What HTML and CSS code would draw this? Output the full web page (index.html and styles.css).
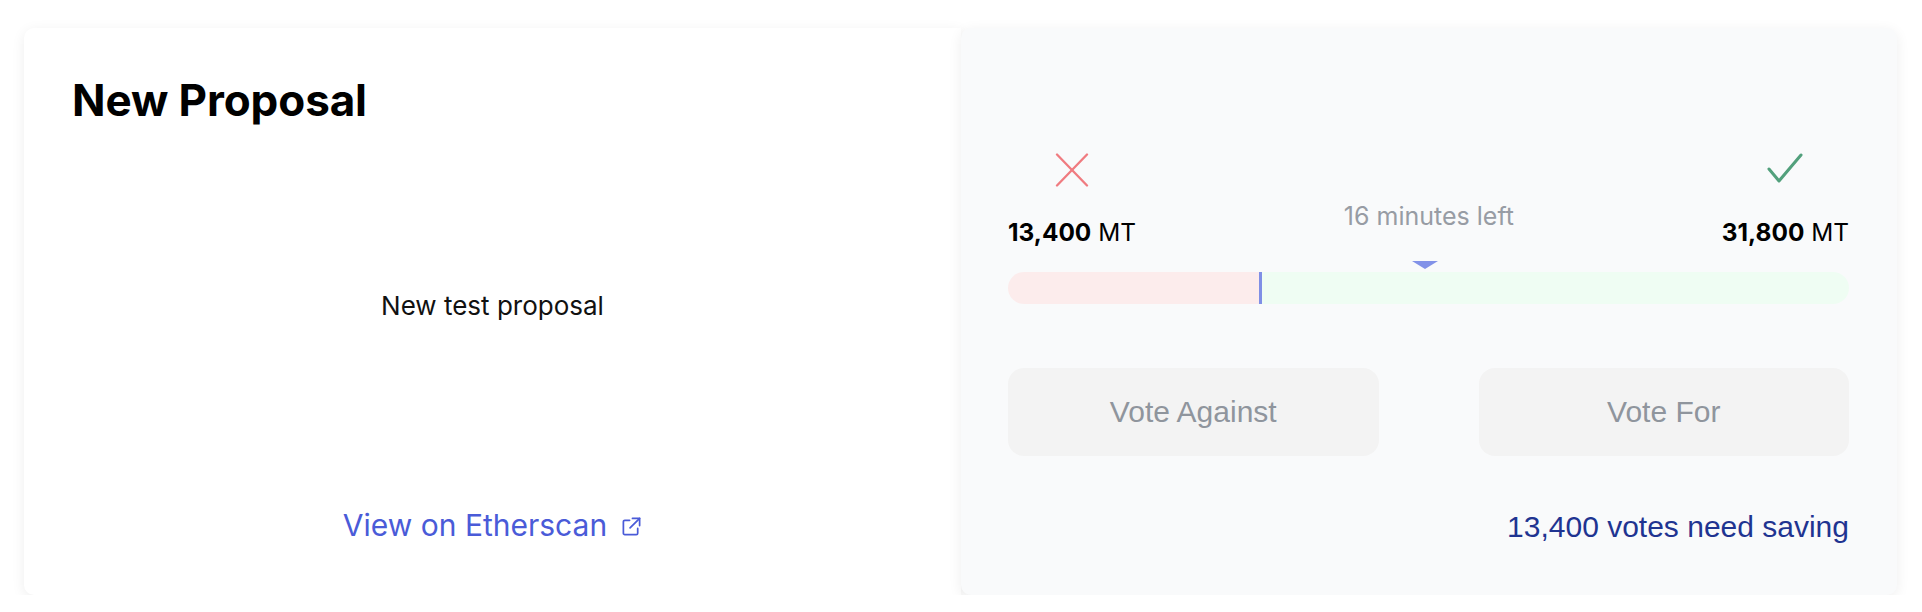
FILE: index.html
```html
<!DOCTYPE html>
<html>
<head>
<meta charset="utf-8">
<link rel="stylesheet" href="styles.css">
</head>
<body>
<div class="page">
  <section class="card card-info">
    <h1 class="title">New Proposal</h1>
    <p class="desc">New test proposal</p>
    <a class="scan-link" href="#">View on Etherscan
      <svg class="ext-icon" viewBox="0 0 22 22" width="21" height="21" fill="none" stroke="currentColor" stroke-width="1.8" stroke-linecap="round" stroke-linejoin="round">
        <path d="M12 2.5h7.5v7.5"/>
        <path d="M19.5 2.5L9.5 12.5"/>
        <path d="M17.5 13v5a1.5 1.5 0 0 1-1.5 1.5H4A1.5 1.5 0 0 1 2.5 18V6A1.5 1.5 0 0 1 4 4.5h5"/>
      </svg>
    </a>
  </section>
  <section class="card card-vote">
    <div class="tally">
      <div class="side">
        <svg class="icon-x" viewBox="0 0 34 34" width="34" height="34" fill="none" stroke="#f07b80" stroke-width="2.3" stroke-linecap="round">
          <path d="M2 1.5L32 32.5"/>
          <path d="M32 1.5L2 32.5"/>
        </svg>
        <div class="amount"><b>13,400</b> MT</div>
      </div>
      <div class="time">16 minutes left</div>
      <div class="side">
        <svg class="icon-check" viewBox="0 0 36 34" width="36" height="34" fill="none" stroke="#52a07c" stroke-width="3" stroke-linecap="round" stroke-linejoin="round">
          <path d="M2 16L12 28L34 2"/>
        </svg>
        <div class="amount"><b>31,800</b> MT</div>
      </div>
    </div>
    <div class="bar">
      <span class="pointer"></span>
      <div class="bar-against" style="width: 30.2%"></div>
      <div class="bar-for"></div>
    </div>
    <div class="buttons">
      <button class="vote-btn">Vote Against</button>
      <button class="vote-btn">Vote For</button>
    </div>
    <div class="saving">13,400 votes need saving</div>
  </section>
</div>
</body>
</html>
```

FILE: styles.css
```css
* { box-sizing: border-box; }

body {
  margin: 0;
  background: #ffffff;
  font-family: Inter, "Noto Sans", sans-serif;
  color: #000;
}

.page {
  display: grid;
  grid-template-columns: 937px 936px;
  padding: 28px 25px 0 24px;
}

.card {
  height: 567px;
  box-shadow: 0 3px 14px rgba(0, 0, 0, 0.07);
}

.card-info {
  background: #ffffff;
  border-radius: 10px 0 0 10px;
  padding: 46px 48px 0;
  display: flex;
  flex-direction: column;
}

.title {
  margin: 0;
  font-size: 44px;
  line-height: 52px;
  font-weight: 700;
  letter-spacing: -0.1px;
}

.desc {
  margin: 165px 0 0;
  text-align: center;
  font-size: 26px;
  line-height: 30px;
  color: #111;
}

.scan-link {
  margin-top: 186px;
  align-self: center;
  display: flex;
  align-items: center;
  gap: 14px;
  font-size: 30px;
  line-height: 36px;
  color: #4a5bd8;
  text-decoration: none;
}

.ext-icon { margin-top: 2px; }

.card-vote {
  position: relative;
  z-index: 1;
  background: #f9fafb;
  border-radius: 10px;
  padding: 125px 48px 0 47px;
}

.tally {
  display: flex;
  justify-content: space-between;
  align-items: flex-start;
}

.side {
  display: flex;
  flex-direction: column;
  align-items: center;
}

.side svg {
  display: block;
  margin-bottom: 31px;
}

.amount {
  font-size: 24.4px;
  line-height: 28px;
  white-space: nowrap;
}

.amount b { font-weight: 700; }

.time {
  margin-top: 49px;
  font-size: 25px;
  line-height: 28px;
  color: #979ca4;
}

.bar {
  position: relative;
  margin-top: 26px;
  height: 32px;
  border-radius: 16px;
  display: flex;
}

.bar-against {
  background: #fcecec;
  border-radius: 16px 0 0 16px;
  border-right: 3px solid #7f8fe6;
}

.bar-for {
  flex: 1;
  background: #effdf3;
  border-radius: 0 16px 16px 0;
}

.pointer {
  position: absolute;
  left: 50%;
  top: -11px;
  margin-left: -17px;
  width: 0;
  height: 0;
  border-left: 13px solid transparent;
  border-right: 13px solid transparent;
  border-top: 8px solid #8292e8;
}

.buttons {
  margin-top: 64px;
  display: grid;
  grid-template-columns: 1fr 1fr;
  gap: 100px;
}

.vote-btn {
  height: 88px;
  border: none;
  border-radius: 16px;
  background: #f3f3f3;
  color: #8f959d;
  font-family: "Liberation Sans", Arial, sans-serif;
  font-size: 30px;
}

.saving {
  margin-top: 53px;
  text-align: right;
  font-family: "Liberation Sans", Arial, sans-serif;
  font-size: 30px;
  line-height: 36px;
  color: #1f3491;
}
```
